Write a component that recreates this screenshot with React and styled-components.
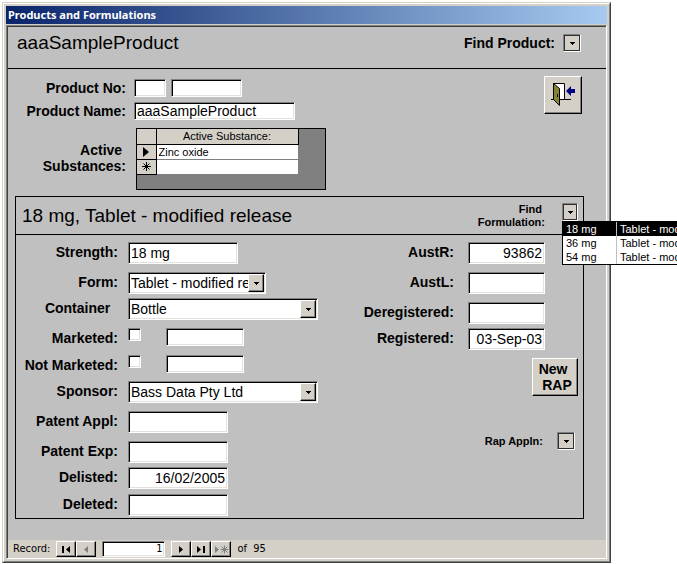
import React from 'react';
import styled, { createGlobalStyle, css } from 'styled-components';

const GlobalStyle = createGlobalStyle`
  *, *::before, *::after { box-sizing: border-box; }
  body {
    margin: 0;
    padding: 2px 66px 0 2px;
    background: #fff;
    color: #000;
    overflow: hidden;
    font-family: "Liberation Sans", Arial, sans-serif;
    font-size: 14px;
  }
  input, select, button { font: inherit; color: inherit; margin: 0; border-radius: 0; }
`;

const sunken = css`
  border: 1px solid;
  border-color: #808080 #fff #fff #808080;
  box-shadow: inset 1px 1px 0 #000, inset -1px -1px 0 #e4e2dd;
`;

const raised = css`
  border: 1px solid;
  border-color: #fff #000 #000 #fff;
  box-shadow: inset -1px -1px 0 #808080;
  background: #d4d0c8;
`;

const Window = styled.main`
  border: 1px solid;
  border-color: #d4d0c8 #404040 #404040 #d4d0c8;
`;

const Frame = styled.div`
  border: 1px solid;
  border-color: #fff #808080 #808080 #fff;
  background: #d4d0c8;
  padding: 2px;
`;

const TitleBar = styled.h1`
  margin: 0;
  padding: 0 2px;
  background: linear-gradient(90deg, #0a246a, #a6caf0);
  border-bottom: 1px solid #d4d0c8;
  color: #fff;
  font: bold 11px/18px "Noto Sans", sans-serif;
`;

const Client = styled.div`
  border: 1px solid;
  border-color: #808080 #fff #fff #808080;
  background: #c0c0c0;
`;

const ClientInner = styled.div`
  border: solid #404040;
  border-width: 1px 0 0 1px;
`;

const ProductHeader = styled.header`
  display: flex;
  justify-content: space-between;
  align-items: center;
  padding: 5px 25px 14px 9px;
  border-bottom: 1px solid #000;
`;

const Heading = styled.h2`
  margin: 0;
  font-size: 19px;
  font-weight: normal;
  line-height: 22px;
`;

const Finder = styled.div`
  position: relative;
  display: flex;
  align-items: ${(p) => (p.$topAligned ? 'flex-start' : 'center')};
  gap: ${(p) => p.$gap}px;
`;

const Label = styled.label`
  font-size: ${(p) => (p.$small ? 11 : 14)}px;
  line-height: ${(p) => (p.$small ? 13 : 16)}px;
  font-weight: bold;
  text-align: right;
  white-space: pre;
`;

const GroupLabel = styled(Label).attrs({ as: 'div' })``;

const ProductSection = styled.section`
  display: flex;
  justify-content: space-between;
  align-items: flex-start;
  padding: 7px 24px 0 0;
`;

const ProductFields = styled.div`
  display: grid;
  grid-template-columns: 118px auto;
  column-gap: 8px;
  row-gap: 5px;
  align-items: center;
  padding-top: 3px;
`;

const Inline = styled.div`
  display: flex;
  gap: ${(p) => p.$gap}px;
`;

const TextBox = styled.input`
  ${sunken}
  width: ${(p) => p.$w}px;
  height: ${(p) => (p.$short ? 18 : 22)}px;
  padding: 0 2px;
  background: #fff;
  text-align: ${(p) => (p.$right ? 'right' : 'left')};
  outline: none;
`;

const Tick = styled.input`
  ${sunken}
  appearance: none;
  width: 13px;
  height: 13px;
  background: #fff;
`;

const ComboFrame = styled.div`
  ${sunken}
  display: grid;
  grid-template-columns: 1fr 16px;
  width: ${(p) => p.$w}px;
  height: 22px;
  padding: 1px;
  background: #fff;
`;

const ComboSelect = styled.select`
  grid-area: 1 / 1 / 2 / 3;
  min-width: 0;
  appearance: none;
  border: 0;
  padding: 0 16px 0 1px;
  background: transparent;
  outline: none;
`;

const ComboArrow = styled.span`
  ${raised}
  grid-area: 1 / 2;
  display: flex;
  align-items: center;
  justify-content: center;
  pointer-events: none;
`;

const DropFrame = styled.div`
  display: grid;
  width: ${(p) => p.$w || 18}px;
  height: 18px;
  border: 1px solid;
  border-color: #808080 #fff #fff #808080;
  background: #d4d0c8;
  box-shadow: inset 0 0 0 1px #303030;
`;

const DropSelect = styled.select`
  grid-area: 1 / 1;
  min-width: 0;
  width: 100%;
  appearance: none;
  border: 0;
  padding: 0;
  background: transparent;
  outline: none;
`;

const DropButton = styled.button`
  grid-area: 1 / 1;
  padding: 0;
  border: 0;
  background: transparent;
`;

const DropGlyph = styled.span`
  grid-area: 1 / 1;
  display: flex;
  align-items: center;
  justify-content: center;
  pointer-events: none;
`;

const DoorButton = styled.button`
  ${raised}
  display: flex;
  align-items: center;
  justify-content: center;
  width: 38px;
  height: 38px;
  padding: 0;
`;

const Datasheet = styled.div`
  width: 190px;
  min-height: 62px;
  margin: 3px 0 0 2px;
  border: 1px solid #000;
  background: #808080;
`;

const Sheet = styled.table`
  border-collapse: collapse;
  table-layout: fixed;
  width: 161px;
  font-size: 11px;
  line-height: 14px;
`;

const HeadCell = styled.th`
  width: ${(p) => (p.$marker ? 19 : 142)}px;
  height: 15px;
  padding: 0;
  border: solid #000;
  border-width: 0 1px 1px 0;
  background: #d4d0c8;
  font-weight: normal;
  text-align: center;
`;

const MarkerGlyph = styled.svg`
  display: block;
  margin: 0 auto;
`;

const Cell = styled.td`
  height: 15px;
  padding: 0 2px;
  border-bottom: 1px solid #808080;
  background: #fff;
`;

const Panel = styled.section`
  margin: 6px 22px 21px 7px;
  border: 1px solid #000;
`;

const PanelHeader = styled.header`
  display: flex;
  justify-content: space-between;
  align-items: center;
  padding: 6px 5px 5px 6px;
  border-bottom: 1px solid #000;
`;

const DropList = styled.ul`
  position: absolute;
  z-index: 2;
  top: 18px;
  left: calc(100% - 16px);
  width: 210px;
  margin: 0;
  padding: 0;
  border: 1px solid #000;
  background: #fff;
  list-style: none;
  font-size: 11px;
  line-height: 14px;
`;

const DropItem = styled.li`
  display: grid;
  grid-template-columns: 54px 1fr;
  background: ${(p) => (p.$active ? '#000' : '#fff')};
  color: ${(p) => (p.$active ? '#fff' : '#000')};
`;

const DropCell = styled.span`
  padding-left: 3px;
  border-right: 1px solid #c0c0c0;
  white-space: nowrap;
`;

const PanelBody = styled.div`
  display: flex;
  justify-content: space-between;
  align-items: flex-start;
  padding: 7px 5px 2px 0;
`;

const Column = styled.div`
  display: flex;
  flex-direction: column;
`;

const Field = styled.div`
  display: grid;
  grid-template-columns: ${(p) => (p.$side ? '96px auto' : '102px auto')};
  column-gap: ${(p) => (p.$side ? 14 : 10)}px;
  align-items: start;
  min-height: 22px;
  margin: ${(p) => p.$top || 0}px ${(p) => (p.$side ? 33 : 0)}px 0 0;

  & > ${Label} { padding-top: 2px; }
`;

const RapButton = styled.button`
  ${raised}
  align-self: flex-end;
  margin-top: 8px;
  width: 46px;
  height: 38px;
  padding: 0;
  font-weight: bold;
  line-height: 16px;
  white-space: pre;
`;

const RapRow = styled(Finder)`
  align-self: flex-end;
  margin: 36px 3px 0 0;
`;

const RecordBar = styled.nav`
  display: flex;
  align-items: center;
  gap: 6px;
  padding: 1px 5px;
  background: #d4d0c8;
  font: 11px/16px "DejaVu Sans Condensed", "DejaVu Sans", sans-serif;
`;

const NavGroup = styled.div`
  display: flex;
`;

const NavButton = styled.button`
  ${raised}
  display: flex;
  align-items: center;
  justify-content: center;
  width: 20px;
  height: 16px;
  padding: 0;
  color: ${(p) => (p.disabled ? '#808080' : '#000')};
`;

const RecordNumber = styled(TextBox)`
  height: 16px;
  font-size: 11px;
`;

const Arrow = () => (
  <svg width="5" height="3" viewBox="0 0 5 3" shapeRendering="crispEdges" aria-hidden="true">
    <path d="M0 0h5v1h-1v1h-1v1h-1v-1h-1v-1h-1z" />
  </svg>
);

const DoorIcon = () => (
  <svg width="26" height="26" viewBox="0 0 26 26" aria-hidden="true">
    <path d="M1 17.5h20" stroke="#000" />
    <path d="M3.500 1.500h11v16h-11z" fill="#fff" stroke="#000" />
    <path d="M3.500 1.500l6 5v17l-6-6z" fill="#848432" stroke="#000" />
    <path d="M7.500 12v3" stroke="#000" />
    <path d="M16 9l5-5v3h4v4h-4v3z" fill="#000080" />
  </svg>
);

const navShapes = {
  first: 'M1 1h2v7h-2zM9 1v7l-4-3.5z',
  prev: 'M7 1v7l-4-3.5z',
  next: 'M3 1v7l4-3.5z',
  last: 'M1 1v7l4-3.5zM7 1h2v7h-2z',
};

const NavIcon = ({ kind }) => (
  <svg width="10" height="9" viewBox="0 0 10 9" fill="currentColor" aria-hidden="true">
    <path d={navShapes[kind]} />
  </svg>
);

const NewIcon = () => (
  <svg width="15" height="9" viewBox="0 0 15 9" fill="currentColor" aria-hidden="true">
    <path d="M1 1v7l4-3.5z" />
    <path d="M10.500 .5v8M6.500 4.500h8M7.500 1.500l6 6M13.500 1.500l-6 6" stroke="currentColor" />
  </svg>
);

const Combo = ({ id, w, value }) => (
  <ComboFrame $w={w}>
    <ComboSelect id={id}>
      <option>{value}</option>
    </ComboSelect>
    <ComboArrow><Arrow /></ComboArrow>
  </ComboFrame>
);

const Drop = ({ id }) => (
  <DropFrame>
    <DropSelect id={id} defaultValue=""><option value="" /></DropSelect>
    <DropGlyph><Arrow /></DropGlyph>
  </DropFrame>
);

const TextField = ({ id, label, w, top, side, value = '', right }) => (
  <Field $top={top} $side={side}>
    <Label htmlFor={id}>{label}</Label>
    <TextBox id={id} $w={w} $right={right} defaultValue={value} />
  </Field>
);

const CheckField = ({ id, label, top }) => (
  <Field $top={top}>
    <Label htmlFor={id}>{label}</Label>
    <Inline $gap={25}>
      <Tick id={id} type="checkbox" />
      <TextBox $w={78} $short aria-label={`${label} date`} />
    </Inline>
  </Field>
);

const formulations = ['18 mg', '36 mg', '54 mg'];

export default function App() {
  return (
    <>
      <GlobalStyle />
      <Window>
        <Frame>
          <TitleBar>Products and Formulations</TitleBar>
          <Client>
            <ClientInner>
              <ProductHeader>
                <Heading>aaaSampleProduct</Heading>
                <Finder $gap={8}>
                  <Label htmlFor="find-product">Find Product:</Label>
                  <Drop id="find-product" />
                </Finder>
              </ProductHeader>

              <ProductSection>
                <ProductFields>
                  <Label htmlFor="product-no">Product No:</Label>
                  <Inline $gap={5}>
                    <TextBox id="product-no" $w={32} $short />
                    <TextBox $w={71} $short aria-label="Product No suffix" />
                  </Inline>
                  <Label htmlFor="product-name">Product Name:</Label>
                  <TextBox id="product-name" $w={161} $short defaultValue="aaaSampleProduct" />
                  <GroupLabel id="substances">{'Active \nSubstances:'}</GroupLabel>
                  <Datasheet>
                    <Sheet aria-labelledby="substances">
                      <thead>
                        <tr>
                          <HeadCell $marker />
                          <HeadCell scope="col">Active Substance:</HeadCell>
                        </tr>
                      </thead>
                      <tbody>
                        <tr>
                          <HeadCell $marker scope="row" aria-label="Current record">
                            <MarkerGlyph width="6" height="10" viewBox="0 0 6 10"><path d="M0 0l6 5l-6 5z" /></MarkerGlyph>
                          </HeadCell>
                          <Cell>Zinc oxide</Cell>
                        </tr>
                        <tr>
                          <HeadCell $marker scope="row" aria-label="New record">
                            <MarkerGlyph width="9" height="9" viewBox="0 0 9 9" stroke="#000">
                              <path d="M4.500 0v9M0 4.500h9M1.500 1.500l6 6M7.500 1.500l-6 6" />
                            </MarkerGlyph>
                          </HeadCell>
                          <Cell />
                        </tr>
                      </tbody>
                    </Sheet>
                  </Datasheet>
                </ProductFields>
                <DoorButton type="button" aria-label="Close form"><DoorIcon /></DoorButton>
              </ProductSection>

              <Panel>
                <PanelHeader>
                  <Heading>18 mg, Tablet - modified release</Heading>
                  <Finder $gap={17} $topAligned>
                    <Label htmlFor="find-formulation" $small>{'Find \nFormulation:'}</Label>
                    <DropFrame $w={16}>
                      <DropButton id="find-formulation" type="button" aria-haspopup="listbox" aria-expanded="true" />
                      <DropGlyph><Arrow /></DropGlyph>
                    </DropFrame>
                    <DropList role="listbox" aria-labelledby="find-formulation">
                      {formulations.map((strength, i) => (
                        <DropItem key={strength} role="option" aria-selected={i === 0} $active={i === 0}>
                          <DropCell>{strength}</DropCell>
                          <DropCell>Tablet - modified release</DropCell>
                        </DropItem>
                      ))}
                    </DropList>
                  </Finder>
                </PanelHeader>

                <PanelBody>
                  <Column>
                    <TextField id="strength" label="Strength:" w={110} value="18 mg" />
                    <Field $top={8}>
                      <Label htmlFor="form">Form:</Label>
                      <Combo id="form" w={138} value="Tablet - modified release" />
                    </Field>
                    <Field $top={4}>
                      <Label htmlFor="container">{'Container  '}</Label>
                      <Combo id="container" w={190} value="Bottle" />
                    </Field>
                    <CheckField id="marketed" label="Marketed:" top={8} />
                    <CheckField id="not-marketed" label="Not Marketed:" top={5} />
                    <Field $top={4}>
                      <Label htmlFor="sponsor">Sponsor:</Label>
                      <Combo id="sponsor" w={190} value="Bass Data Pty Ltd" />
                    </Field>
                    <TextField id="patent-appl" label="Patent Appl:" w={100} top={8} />
                    <TextField id="patent-exp" label="Patent Exp:" w={100} top={8} />
                    <TextField id="delisted" label="Delisted:" w={100} top={4} value="16/02/2005" right />
                    <TextField id="deleted" label="Deleted:" w={100} top={5} />
                  </Column>

                  <Column>
                    <TextField id="aust-r" label="AustR:" w={77} value="93862" right side />
                    <TextField id="aust-l" label="AustL:" w={77} top={8} side />
                    <TextField id="deregistered" label="Deregistered:" w={77} top={8} side />
                    <TextField id="registered" label="Registered:" w={77} top={4} value="03-Sep-03" right side />
                    <RapButton type="button">{'New \n RAP'}</RapButton>
                    <RapRow $gap={14}>
                      <Label htmlFor="rap-appln" $small>Rap Appln:</Label>
                      <Drop id="rap-appln" />
                    </RapRow>
                  </Column>
                </PanelBody>
              </Panel>

              <RecordBar aria-label="Record navigation">
                <label htmlFor="record">Record:</label>
                <NavGroup>
                  <NavButton type="button" aria-label="First record"><NavIcon kind="first" /></NavButton>
                  <NavButton type="button" aria-label="Previous record" disabled><NavIcon kind="prev" /></NavButton>
                </NavGroup>
                <RecordNumber id="record" $w={63} $right defaultValue="1" />
                <NavGroup>
                  <NavButton type="button" aria-label="Next record"><NavIcon kind="next" /></NavButton>
                  <NavButton type="button" aria-label="Last record"><NavIcon kind="last" /></NavButton>
                  <NavButton type="button" aria-label="New record" disabled><NewIcon /></NavButton>
                </NavGroup>
                <span>of &nbsp;95</span>
              </RecordBar>
            </ClientInner>
          </Client>
        </Frame>
      </Window>
    </>
  );
}
